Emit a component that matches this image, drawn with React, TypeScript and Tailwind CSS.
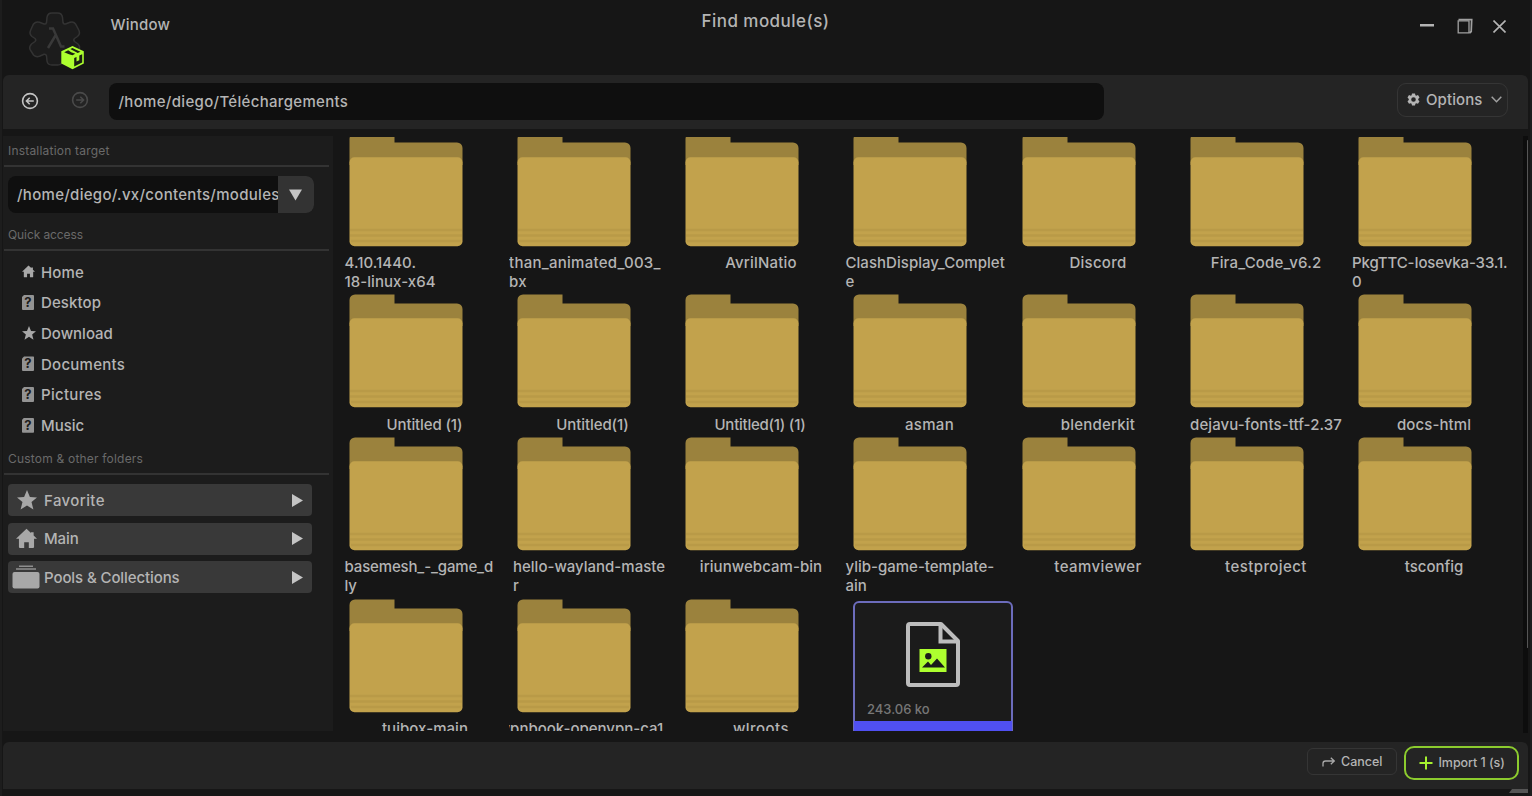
import React from "react";

type Item = { l: string[]; t: string; s?: string };

const rows: Item[][] = [
  [
    { l: ["4.10.1440.", "18-linux-x64"], t: "tracking-[0.05px]", s: "pl-[3.5px]" },
    { l: ["than_animated_003_", "bx"], t: "tracking-[0.27px]", s: "pl-0" },
    { l: ["AvrilNatio"], t: "tracking-[0.2px]" },
    { l: ["ClashDisplay_Complet", "e"], t: "tracking-[0.04px]", s: "pl-[0.5px]" },
    { l: ["Discord"], t: "tracking-[0.25px]" },
    { l: ["Fira_Code_v6.2"], t: "tracking-[0.15px]" },
    { l: ["PkgTTC-Iosevka-33.1.", "0"], t: "tracking-[-0.12px]", s: "pl-[2px]" },
  ],
  [
    { l: ["Untitled (1)"], t: "tracking-[-0.12px]", s: "-ml-[1px] text-center" },
    { l: ["Untitled(1)"], t: "tracking-[-0.08px]", s: "-ml-[1px] text-center" },
    { l: ["Untitled(1) (1)"], t: "tracking-[-0.25px]", s: "-ml-[2px] text-center" },
    { l: ["asman"], t: "tracking-[0.3px]" },
    { l: ["blenderkit"], t: "tracking-[0.2px]" },
    { l: ["dejavu-fonts-ttf-2.37"], t: "tracking-[0.08px]" },
    { l: ["docs-html"], t: "tracking-[0.1px]" },
  ],
  [
    { l: ["basemesh_-_game_d", "ly"], t: "tracking-[-0.15px]", s: "pl-[3.5px]" },
    { l: ["hello-wayland-maste", "r"], t: "tracking-[0px]", s: "pl-[4px]" },
    { l: ["iriunwebcam-bin"], t: "tracking-[0.05px]" },
    { l: ["ylib-game-template-", "ain"], t: "tracking-[0px]", s: "pl-[0.5px]" },
    { l: ["teamviewer"], t: "tracking-[0.4px]" },
    { l: ["testproject"], t: "tracking-[0.42px]" },
    { l: ["tsconfig"], t: "tracking-[0px]" },
  ],
  [
    { l: ["tuibox-main"], t: "tracking-[0.05px]" },
    { l: ["vpnbook-openvpn-ca1"], t: "tracking-[0px]", s: "-ml-[7.5px]" },
    { l: ["wlroots"], t: "tracking-[0.45px]" },
  ],
];

function Folder() {
  return (
    <svg width="114" height="114" viewBox="0 0 114 114" className="ml-2 block">
      <path d="M0.5 32V6a5.500 5.500 0 0 1 5.500-5.500H45.500V9.500H108a5.500 5.500 0 0 1 5.500 5.500V32Z" fill="#9b823d" />
      <rect x="0.5" y="24.300" width="113" height="88.900" rx="5" fill="#c2a24c" />
      <path d="M1 97H113M1 102.500H113M2 108H112" stroke="#b99a47" strokeWidth="2.500" />
    </svg>
  );
}

function Cell({ item }: { item: Item }) {
  return (
    <div className="overflow-hidden">
      <Folder />
      <div className={"mt-[7.500px] whitespace-nowrap leading-[18.500px] " + item.t + " " + (item.s ?? "text-center")}>
        {item.l.map((x) => (
          <div key={x}>{x}</div>
        ))}
      </div>
    </div>
  );
}

function ImageFile() {
  return (
    <svg width="54" height="65" viewBox="0 0 54 65">
      <path d="M4 2H35L52 19V61a2 2 0 0 1-2 2H4a2 2 0 0 1-2-2V4a2 2 0 0 1 2-2Z" fill="none" stroke="#bdbdbd" strokeWidth="4" strokeLinejoin="round" />
      <path d="M34.500 3V19.500H51" fill="none" stroke="#bdbdbd" strokeWidth="4" />
      <rect x="13.500" y="27" width="27" height="23" fill="#adff2f" />
      <circle cx="22.300" cy="34.300" r="3.200" fill="#1b1b1b" />
      <path d="M16 45.500 22 39.500 25 43 31 36.500 39 45.500Z" fill="#1b1b1b" />
    </svg>
  );
}

function SelectedFile() {
  return (
    <div className="ml-2 mt-[2px] flex h-[140px] w-[160px] flex-col rounded-t-md border-2 border-[#6c6cbc] bg-[#1b1b1b]">
      <div className="flex h-[105px] justify-center pt-[19px]">
        <ImageFile />
      </div>
      <div className="-mt-[5px] h-[18.500px] pl-[12px] text-[13px] leading-[13px] text-[#777777]">243.06 ko</div>
      <div className="-mx-px grow bg-[#5050f2]" />
    </div>
  );
}

function Logo() {
  return (
    <svg width="60" height="60" viewBox="0 0 60 60">
      <path
        d="M22 7.500Q22.500 3 27 3H32.500Q37 3 37.500 7.500L38 12.500Q38.500 14.500 40.500 14L45 12.300Q48.500 11 50.500 14L54 20.500Q55.500 24 52.500 26.500L49.500 28.500Q48 30 49.500 31.500L53 34Q55.500 36.500 54 39.500L50.500 45Q48.500 47.500 45 46.300L40.500 44.300Q38.500 44 38 46L37.500 51Q37 55 32.500 55H27Q22.500 55 22 51L21.500 46Q21 44 19 44.300L14.500 46.300Q11 47.500 8.500 45L5 39.500Q4 36.500 6.500 34L10 31.500Q11.500 30 10 28.500L7 26.500Q4 24 5.500 20.500L8.500 14Q11 11 14.500 12.300L19 14Q21 14.500 21.500 12.500Z"
        fill="#1c1c1c"
        stroke="#333333"
        strokeWidth="1.500"
      />
      <path d="M24 18.500H28L36 36.500H39.500M30.500 25.500 23 38" fill="none" stroke="#393939" strokeWidth="2.500" />
      <path d="M47.500 36 58.800 41.300V53.500L47.500 59.300 36.300 53.500V41.300Z" fill="#adff2f" />
      <path d="M49.200 48 51.500 46.900V51.500L54.300 50.200V45.600L57.200 44.200V52.500L49.200 56.600Z" fill="#1a1f12" />
      <path d="M39.200 42.200 43.200 40.300 46.200 42.200 50.300 43.800 47.500 45.300 44 44.300ZM45.300 39 47.500 38 51 39.800 55.500 41.800 52.700 43 49 41Z" fill="#1a1f12" />
    </svg>
  );
}

function GearIcon() {
  return (
    <svg width="13" height="13" viewBox="0 0 13 13" fill="#b4b4b4">
      <path fillRule="evenodd" d="M5 0.500H8L8.400 2.300 9.200 2.700 11 2.100 12.500 4.600 11.200 5.900V7L12.500 8.300 11 10.800 9.200 10.200 8.400 10.700 8 12.500H5L4.600 10.700 3.800 10.200 2 10.800 0.500 8.300 1.800 7V5.900L0.500 4.600 2 2.100 3.800 2.700 4.600 2.300ZM6.500 4.200A2.300 2.300 0 1 0 6.500 8.800 2.300 2.300 0 0 0 6.500 4.200Z" />
    </svg>
  );
}

function ArrowCircle({ flip, className }: { flip?: boolean; className: string }) {
  return (
    <svg width="18" height="18" viewBox="0 0 18 18" fill="none" stroke="currentColor" className={className}>
      <circle cx="9" cy="9" r="7.400" strokeWidth="1.600" />
      <path d={flip ? "M5.200 9H12.500M9.300 5.700 12.600 9 9.300 12.300" : "M12.800 9H5.500M8.700 5.700 5.400 9 8.700 12.300"} strokeWidth="1.500" />
    </svg>
  );
}

function HomeIcon({ size }: { size: number }) {
  return (
    <svg width={size} height={size} viewBox="0 0 20 20" fill="#a8a8a8">
      <path d="M10 0.800 0 10.300H2.800V18a1 1 0 0 0 1 1H7.800V13.500H12.200V19H16.200a1 1 0 0 0 1-1V10.300H20L16.800 7.200V4H14.300V4.800Z" />
    </svg>
  );
}

function StarIcon({ size }: { size: number }) {
  return (
    <svg width={size} height={size} viewBox="0 0 20 20" fill="#a8a8a8">
      <path d="M10 0 12.900 7 20 7.400 14.500 12 16.400 19.500 10 15.500 3.600 19.500 5.500 12 0 7.400 7.100 7Z" />
    </svg>
  );
}

function PoolsIcon() {
  return (
    <svg width="28" height="24" viewBox="0 0 28 24" fill="#a8a8a8" className="-ml-px">
      <path d="M7 0.500H21V2H7ZM4 3.300H24V4.800H4Z" fill="#8e8e8e" />
      <rect x="0.500" y="7" width="27" height="16.500" rx="2" />
    </svg>
  );
}

function UnknownIcon() {
  return (
    <span className="flex h-[15px] w-3 items-center justify-center rounded-[1px] bg-[#939393] text-[13px] font-bold leading-none text-[#1c1c1c] [clip-path:polygon(2px_0,100%_0,100%_100%,0_100%,0_2px)]">
      ?
    </span>
  );
}

const quick = [
  { n: "Home", t: "tracking-[0.15px]", i: <HomeIcon size={13} /> },
  { n: "Desktop", t: "tracking-[0.1px]", i: <UnknownIcon /> },
  { n: "Download", t: "tracking-[0px]", i: <StarIcon size={14} /> },
  { n: "Documents", t: "tracking-[0.25px]", i: <UnknownIcon /> },
  { n: "Pictures", t: "tracking-[0.3px]", i: <UnknownIcon /> },
  { n: "Music", t: "tracking-[0px]", i: <UnknownIcon /> },
];

const groups = [
  { n: "Favorite", t: "tracking-[0.4px]", i: <StarIcon size={20} /> },
  { n: "Main", t: "tracking-[-0.1px]", i: <HomeIcon size={21} /> },
  { n: "Pools & Collections", t: "tracking-[-0.1px]", i: <PoolsIcon /> },
];

function Heading({ children, className }: { children: React.ReactNode; className: string }) {
  return (
    <div className={"mr-1 ml-px h-[31px] border-b-2 border-[#333333] pl-1 text-[12px] font-normal leading-[29px] text-[#6a6a6a] " + className}>
      {children}
    </div>
  );
}

function Sidebar() {
  return (
    <aside className="flex h-[595px] w-[330px] flex-col bg-[#1c1c1c]">
      <Heading className="tracking-[0.2px]">Installation target</Heading>
      <div className="ml-[5px] mt-[9px] flex h-[37px] w-[306px] shrink-0 overflow-hidden rounded-lg bg-[#0f0f0f]">
        <div className="w-[270px] overflow-hidden whitespace-nowrap pl-[9px] leading-[38px] tracking-[0.3px]">/home/diego/.vx/contents/modules</div>
        <div className="flex w-9 items-center justify-center bg-[#333333]">
          <svg width="13" height="12" viewBox="0 0 13 12" fill="#c4c4c4" className="-ml-px">
            <path d="M0 0.500H13L6.500 11.500Z" />
          </svg>
        </div>
      </div>
      <Heading className="mt-[7px] tracking-[-0.1px]">Quick access</Heading>
      <ul className="mt-[6px]">
        {quick.map((q) => (
          <li key={q.n} className="flex h-[30.700px] items-center">
            <span className="ml-[19px] w-[19px] pb-px">{q.i}</span>
            <span className={"pt-px " + q.t}>{q.n}</span>
          </li>
        ))}
      </ul>
      <Heading className="mt-[3px] tracking-[0.2px]">Custom &amp; other folders</Heading>
      <div className="mt-[9px] flex flex-col gap-[6.500px] pl-[5px]">
        {groups.map((g) => (
          <div key={g.n} className="flex h-8 w-[304px] items-center rounded bg-[#393939]">
            <span className="flex w-9 justify-center pl-px">{g.i}</span>
            <span className={"grow pt-[1.500px] " + g.t}>{g.n}</span>
            <svg width="11" height="13" viewBox="0 0 11 13" fill="#c4c4c4" className="mr-[9px]">
              <path d="M0 0 11 6.500 0 13Z" />
            </svg>
          </div>
        ))}
      </div>
    </aside>
  );
}

export default function App() {
  return (
    <div className="flex h-[796px] w-[1532px] flex-col overflow-hidden border-x-2 border-l-[#1d1d1d] border-r-[#1e1e1e] bg-[#161616] pl-px pr-[2px] font-['Inter',sans-serif] text-[15px] font-medium text-[#b4b4b4]">
      <header className="grid h-[75px] shrink-0 grid-cols-[1fr_auto_1fr] items-start">
        <div className="flex">
          <div className="ml-[22px] mt-[10px]">
            <Logo />
          </div>
          <span className="ml-[25.500px] mt-[14px] leading-[22px] tracking-[0.2px]">Window</span>
        </div>
        <h1 className="mt-[10px] text-[17px] leading-[22px] tracking-[0.45px]">Find module(s)</h1>
        <div className="mr-[22px] mt-[17px] flex items-center justify-end">
          <svg width="14" height="18" viewBox="0 0 14 18" className="mr-[23px]">
            <rect y="7" width="14" height="2.500" fill="#b4b4b4" />
          </svg>
          <svg width="16" height="16" viewBox="0 0 16 16" fill="none" stroke="#a0a0a0" className="mr-[20px]">
            <path d="M1.200 2.800H12V14.800H1.200Z" strokeWidth="1.300" />
            <path d="M1.500 1.600H14.700L14.200 13.500 12.500 15" strokeWidth="1.700" />
          </svg>
          <svg width="13" height="13" viewBox="0 0 13 13" stroke="#b4b4b4" strokeWidth="1.600">
            <path d="M0.500 0.500 12.500 12.500M12.500 0.500 0.500 12.500" />
          </svg>
        </div>
      </header>

      <div className="flex h-[53.500px] shrink-0 items-start rounded-t-md bg-[#242424]">
        <ArrowCircle className="ml-[17.500px] mt-[17px] text-[#c4c4c4]" />
        <ArrowCircle flip className="ml-[32.500px] mt-[16px] text-[#4a4a4a]" />
        <div className="ml-[20px] mt-[8px] h-[36.500px] w-[995px] rounded-lg bg-[#0f0f0f] pl-[9.500px] leading-[38px] tracking-[0.32px]">
          /home/diego/Téléchargements
        </div>
        <button className="ml-auto mr-5 mt-[7.500px] flex h-[34.500px] w-[111px] items-center rounded-[9px] border border-[#353535] pl-[9px] tracking-[0.1px]">
          <GearIcon />
          <span className="ml-[6px] grow pt-[1.500px] text-left">Options</span>
          <svg width="11" height="7" viewBox="0 0 11 7" fill="none" stroke="#a0a0a0" strokeWidth="1.500" className="mr-[5px]">
            <path d="M0.700 0.700 5.500 5.700 10.300 0.700" />
          </svg>
        </button>
      </div>

      <main className="flex h-[613.500px] shrink-0 pt-[7.500px]">
        <Sidebar />
        <div className="mt-px flex h-[594px] w-[1180px] overflow-hidden pl-[12px]">
          <div className="-ml-1 -mt-[4.500px] grid shrink-0 grid-cols-[168px_168px_168px_169px_168px_168px_168px] grid-rows-[161.500px_142.500px_162px_162px]">
            {rows.flat().map((i) => (
              <Cell key={i.l[0]} item={i} />
            ))}
            <SelectedFile />
          </div>
        </div>
        <div className="ml-auto h-[597px] w-[5px] bg-[#0d0d0d] pt-[4px]">
          <div className="ml-auto h-[508px] w-px rounded-full bg-[#555555]" />
        </div>
      </main>

      <footer className="flex h-[47px] shrink-0 items-start justify-end rounded-t-md bg-[#242424] text-[12.500px]">
        <button className="mr-[7px] mt-[6px] flex h-[27px] w-[90px] items-center rounded-md border border-[#353535] pl-[14px]">
          <svg width="13" height="10" viewBox="0 0 13 10" fill="none" stroke="#a8a8a8" strokeWidth="1.300" className="mr-[6px]">
            <path d="M1 9.500V6.500Q1 4 3.500 4H12M8.800 0.800 12.200 4 8.800 7.200" />
          </svg>
          <span className="pt-px">Cancel</span>
        </button>
        <button className="mr-[9px] mt-[4px] flex h-[34px] w-[115px] items-center rounded-[10px] border-2 border-[#8ccb2e] pl-[12.500px]">
          <svg width="14" height="14" viewBox="0 0 14 14" stroke="#a6f22f" strokeWidth="2" className="mr-[6px]">
            <path d="M7 0.500V13.500M0.500 7H13.500" />
          </svg>
          <span className="tracking-[-0.05px]">Import 1 (s)</span>
        </button>
      </footer>
      <div className="flex justify-end">
        <svg width="19" height="4" viewBox="0 0 19 4">
          <path d="M3 0H19V4H0Z" fill="#555555" />
        </svg>
      </div>
    </div>
  );
}
